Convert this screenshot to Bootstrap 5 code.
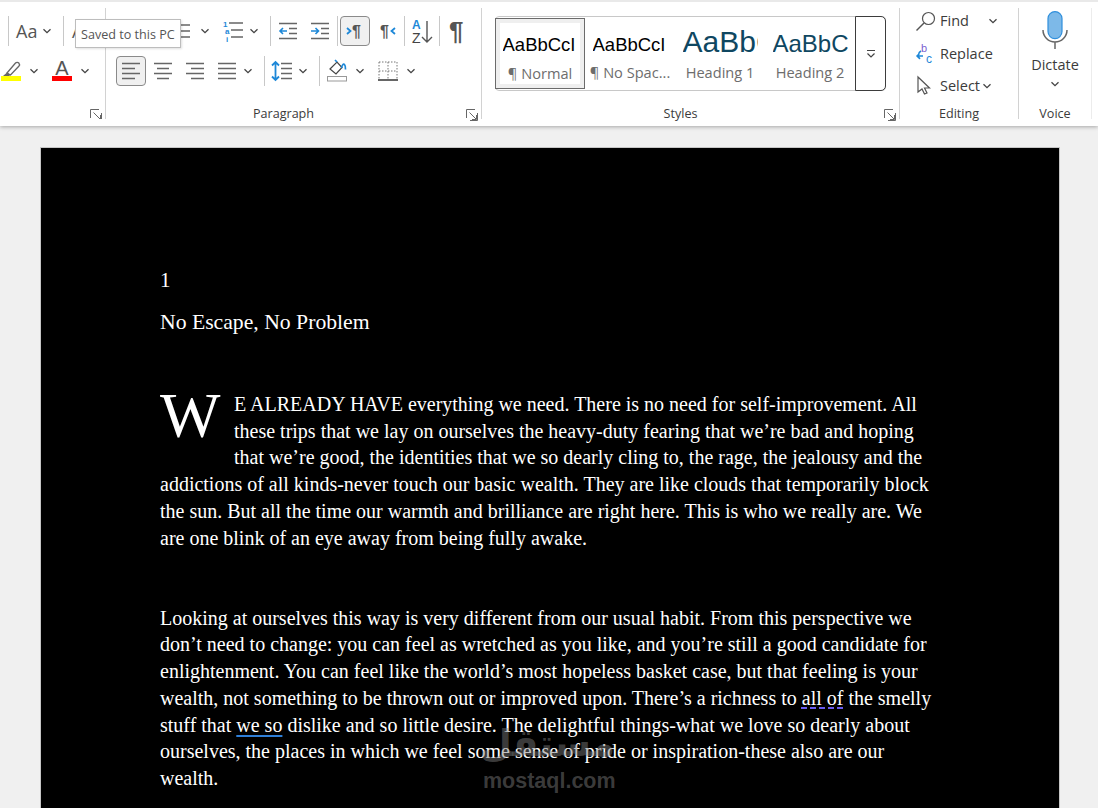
<!DOCTYPE html>
<html lang="en">
<head>
  <meta charset="UTF-8">
  <meta name="viewport" content="width=device-width, initial-scale=1">
  <title>No Escape, No Problem</title>
  <link href="https://cdn.jsdelivr.net/npm/bootstrap@5.3.0/dist/css/bootstrap.min.css" rel="stylesheet">
  <style>
    html, body { height: 808px; overflow: hidden; }
    body { background: #f0f0f0; font-family: "Open Sans", "Noto Sans", sans-serif; color: #3b3b3b; }
    svg { flex: none; display: block; overflow: visible; }
    svg text { font-family: "Liberation Sans", sans-serif; }

    .ribbon { height: 126px; background: #fff; border-top: 2px solid #e9e9e9; padding: 6px 0 7px; box-shadow: 0 1px 4px rgba(0,0,0,.3); position: relative; }
    .rgroup { border-right: 1px solid #d2d2d2; height: 111px; flex: none; position: relative; }
    .g-font { width: 106px; overflow: hidden; }
    .g-para { width: 376px; }
    .g-styles { width: 418px; }
    .g-edit { width: 119px; }
    .g-voice { width: 73px; border-right-color: #ececec; }
    .trow { height: 30px; margin-top: 8px; margin-bottom: 10px; }
    .trow + .trow { margin-top: 0; }
    .tsep { width: 1px; height: 30px; background: #c8c8c8; flex: none; }
    .tact { width: 30px; height: 30px; flex: none; background: #f0f0f0; border: 1px solid #8a8a8a; border-radius: 4px; }
    .aa { font-size: 18px; width: 21px; line-height: 29px; white-space: nowrap; color: #555; }
    .alab { font-size: 18px; line-height: 29px; color: #555; }
    .glabel { height: 15px; font-size: 12.6px; line-height: 15px; color: #3b3b3b; }
    .glabel-row { position: absolute; top: 98px; left: 0; right: 0; }
    .launch { margin: 3px 3px 0 5px; }

    .gallery { width: 391px; height: 75px; margin: 8px 0 0 13px; border: 1px solid #c8c8c8; border-radius: 4px; }
    .scell { width: 90px; height: 73px; overflow: hidden; text-align: center; flex: none; }
    .scell-on { height: 71px; margin-top: 1px; border: 1px solid #6b6b6b; box-shadow: inset 0 0 0 4px #efefef; margin-left: -1px; }
    .ssample { height: 41px; width: 75px; margin: 0 auto; overflow: hidden; white-space: nowrap; text-align: left; color: #000; font-family: "Liberation Sans", sans-serif; }
    .s-body { font-size: 18.5px; line-height: 55px; }
    .s-h1 { font-size: 30px; line-height: 50px; color: #0f4761; }
    .s-h2 { font-size: 24px; line-height: 53px; color: #0f4761; }
    .sname { font-size: 14.6px; line-height: 20px; color: #6d6d6d; white-space: nowrap; margin-top: 4px; }
    .scell-on .ssample { margin-top: -2px; }
    .scell-on .sname { margin-top: 5px; }
    .smore { width: 31px; height: 75px; margin: -1px -1px 0 0; border: 1px solid #3d3d3d; border-radius: 0 5px 5px 0; background: #fff; flex: none; }

    .erow { height: 32.5px; font-size: 14.5px; line-height: 32px; white-space: nowrap; }
    .erow-first { margin-top: -3px; }
    .erow-text { width: 47px; }
    .mic { margin: 3px auto 6px; }
    .dict { font-size: 14.5px; line-height: 20px; }

    .tipbox { position: absolute; left: 75px; top: 17px; width: 106px; height: 29px; background: #fff; border: 1px solid #bdbdbd; box-shadow: 1px 1px 2px rgba(0,0,0,.12); font-size: 12.6px; line-height: 29px; padding-left: 5px; color: #555; white-space: nowrap; z-index: 3; }

    .docpage { position: relative; width: 1018px; height: 700px; margin: 22px 0 0 41px; background: #000; outline: 1px solid #c6c6c6; color: #fff; padding: 119px 0 0 119px; font-family: "Liberation Serif", "Times New Roman", serif; font-size: 20px; line-height: 26.75px; white-space: nowrap; }
    .pnum { height: 26.75px; font-size: 21px; }
    .ptitle { margin-top: 15px; font-size: 21.7px; }
    .para1 { margin-top: 55.3px; }
    .para2 { margin-top: 53.4px; }
    .dropcap { float: left; font-size: 64px; line-height: 50px; height: 74px; width: 74px; }
    .sq-blue { text-decoration: underline 2px #2f7fd8; text-underline-offset: 3px; }
    .sq-dot { text-decoration: underline dashed 2px #6a5cf0; text-underline-offset: 3px; }
    .wmark { position: absolute; left: 442px; top: 571px; width: 132px; text-align: center; color: rgba(125,125,125,.48); font-family: "Liberation Sans", sans-serif; font-weight: 700; pointer-events: none; }
    .wmark-ar { font-family: "DejaVu Sans", sans-serif; font-size: 37px; line-height: 50px; }
    .wmark-en { font-size: 21.5px; line-height: 24px; }

    .l1{margin-left:1px}.l2{margin-left:2px}.l5{margin-left:5px}.l6{margin-left:6px}.l7{margin-left:7px}.l8{margin-left:8px}.l9{margin-left:9px}.l10{margin-left:10px}.l11{margin-left:11px}.l13{margin-left:13px}.l14{margin-left:14px}.l64{margin-left:64px}
  </style>
</head>
<body>

<svg width="0" height="0" class="position-absolute">
  <symbol id="chev" viewBox="0 0 10 10"><path d="M1.500 3.200 5 6.700 8.500 3.200" fill="none" stroke="#444" stroke-width="1.300"/></symbol>
  <symbol id="launch" viewBox="0 0 12 12"><path d="M.5 9V.5H9M4 11.500h7.500V4M3.500 3.500 10 10M10.500 6v4.500H6" fill="none" stroke="#666" stroke-width="1"/></symbol>
</svg>

<!-- Ribbon -->
<div class="ribbon d-flex">

  <div class="rgroup g-font">
    <div class="trow d-flex align-items-center">
      <span class="tsep l8"></span>
      <span class="aa l7">Aa</span>
      <svg class="l5" width="10" height="10"><use href="#chev"/></svg>
      <span class="tsep l11"></span>
      <span class="alab l8">A</span>
    </div>
    <div class="trow d-flex align-items-center">
      <svg class="l1" width="22" height="24" viewBox="0 0 22 24"><path d="M6 14 14.500 4c1-1 2.500-.8 3.300 0 .9 1 .9 2.200 0 3.200L9.500 16z" fill="#fff" stroke="#666" stroke-width="1.300"/><path d="M6 13.500 9.500 16l-1.500 1H2z" fill="#666"/><rect y="17" width="20" height="5" fill="#ff0"/></svg>
      <svg class="l6" width="10" height="10"><use href="#chev"/></svg>
      <svg class="l13" width="20" height="24" viewBox="0 0 20 24"><text x="10" y="16" font-size="20" text-anchor="middle" fill="#555">A</text><rect y="17" width="20" height="5" fill="#f00"/></svg>
      <svg class="l8" width="10" height="10"><use href="#chev"/></svg>
    </div>
    <div class="glabel-row d-flex">
      <span class="glabel flex-grow-1"></span>
      <svg class="launch" width="12" height="12"><use href="#launch"/></svg>
    </div>
  </div>

  <div class="rgroup g-para">
    <div class="trow d-flex align-items-center">
      <svg class="l64" width="20" height="20" viewBox="0 0 20 20"><path d="M0 4h20M0 10h20M0 16h20" stroke="#666" stroke-width="1.600"/></svg>
      <svg class="l10" width="10" height="10"><use href="#chev"/></svg>
      <svg class="l13" width="20" height="22" viewBox="0 0 20 22"><g fill="#1e88d8" font-size="8" font-weight="700"><text x="0" y="7">1</text><text x="2" y="14">a</text><text x="3" y="22">i</text></g><path d="M6 3h14M8 10h12M8 17h12" stroke="#666" stroke-width="1.600"/></svg>
      <svg class="l6" width="10" height="10"><use href="#chev"/></svg>
      <span class="tsep l11"></span>
      <svg class="l8" width="18" height="18" viewBox="0 0 18 18"><path d="M0 1.500h18M10 6.500h8M10 11.500h8M0 16.500h18" stroke="#666" stroke-width="1.600"/><path d="M8 9H1M4 6 1 9l3 3" fill="none" stroke="#1e88d8" stroke-width="1.600"/></svg>
      <svg class="l14" width="18" height="18" viewBox="0 0 18 18"><path d="M0 1.500h18M10 6.500h8M10 11.500h8M0 16.500h18" stroke="#666" stroke-width="1.600"/><path d="M0 9h7M4.500 6l3 3-3 3" fill="none" stroke="#1e88d8" stroke-width="1.600"/></svg>
      <span class="tsep l8"></span>
      <span class="tact l2 d-flex align-items-center justify-content-center">
        <svg width="18" height="16" viewBox="0 0 18 16"><path d="M1 5l3.500 3L1 11" fill="none" stroke="#1e88d8" stroke-width="1.800"/><text x="6" y="14" font-size="16" font-weight="700" fill="#555">¶</text></svg>
      </span>
      <svg class="l10" width="16" height="16" viewBox="0 0 16 16"><text x="0" y="14" font-size="16" font-weight="700" fill="#555">¶</text><path d="M15 5l-3.500 3 3.500 3" fill="none" stroke="#1e88d8" stroke-width="1.800"/></svg>
      <span class="tsep l8"></span>
      <svg class="l6" width="22" height="26" viewBox="0 0 22 26"><text x="1" y="11" font-size="12" font-weight="700" fill="#1e88d8">A</text><text x="1" y="25" font-size="14" fill="#444">Z</text><path d="M16 3v21M11 19l5 5 5-5" fill="none" stroke="#555" stroke-width="1.400"/></svg>
      <span class="tsep l6"></span>
      <svg class="l9" width="16" height="22" viewBox="0 0 16 22"><text x="0" y="20" font-size="26" font-weight="700" fill="#555">¶</text></svg>
    </div>
    <div class="trow d-flex align-items-center">
      <span class="tact l10 d-flex align-items-center justify-content-center">
        <svg width="18" height="18" viewBox="0 0 18 18"><path d="M0 1.500h18M0 6.500h13M0 11.500h18M0 16.500h13" stroke="#666" stroke-width="1.600"/></svg>
      </span>
      <svg class="l8" width="18" height="18" viewBox="0 0 18 18"><path d="M0 1.500h18M3 6.500h12M0 11.500h18M3 16.500h12" stroke="#666" stroke-width="1.600"/></svg>
      <svg class="l14" width="18" height="18" viewBox="0 0 18 18"><path d="M0 1.500h18M5 6.500h13M0 11.500h18M5 16.500h13" stroke="#666" stroke-width="1.600"/></svg>
      <svg class="l14" width="18" height="18" viewBox="0 0 18 18"><path d="M0 1.500h18M0 6.500h18M0 11.500h18M0 16.500h18" stroke="#666" stroke-width="1.600"/></svg>
      <svg class="l7" width="10" height="10"><use href="#chev"/></svg>
      <span class="tsep l11"></span>
      <svg class="l7" width="20" height="20" viewBox="0 0 20 20"><path d="M3.500 2v16M0 4.500l3.500-3.500L7 4.500M0 15.500 3.500 19 7 15.500" fill="none" stroke="#1e88d8" stroke-width="1.800"/><path d="M9 2.500h11M9 7.500h11M9 12.500h11M9 17.500h11" stroke="#666" stroke-width="1.600"/></svg>
      <svg class="l6" width="10" height="10"><use href="#chev"/></svg>
      <span class="tsep l11"></span>
      <svg class="l7" width="20" height="22" viewBox="0 0 20 22"><path d="M3 9 10 2l5 5.500-6 6.500z" fill="#fff" stroke="#444" stroke-width="1.200"/><path d="M10 2 8 0M14.500 8c.5-3 2-4.500 3-3.500.8.800 1 2.500 1 5" fill="none" stroke="#1e88d8" stroke-width="1.700"/><rect x=".5" y="16.500" width="19" height="4.500" fill="#fff" stroke="#999"/></svg>
      <svg class="l8" width="10" height="10"><use href="#chev"/></svg>
      <svg class="l13" width="20" height="20" viewBox="0 0 20 20"><path d="M1 1h18M1 1v18M19 1v18M10 1v18M1 10h18" stroke="#777" stroke-width="1" stroke-dasharray="1.500 1.500" fill="none"/><path d="M0 19h20" stroke="#555" stroke-width="1.800"/></svg>
      <svg class="l8" width="10" height="10"><use href="#chev"/></svg>
    </div>
    <div class="glabel-row d-flex">
      <span class="glabel flex-grow-1 text-center">Paragraph</span>
      <svg class="launch" width="12" height="12"><use href="#launch"/></svg>
    </div>
  </div>

  <div class="rgroup g-styles">
    <div class="gallery d-flex">
      <div class="scell scell-on">
        <div class="ssample s-body">AaBbCcI</div>
        <div class="sname">¶ Normal</div>
      </div>
      <div class="scell">
        <div class="ssample s-body">AaBbCcI</div>
        <div class="sname">¶ No Spac...</div>
      </div>
      <div class="scell">
        <div class="ssample s-h1">AaBbC</div>
        <div class="sname">Heading 1</div>
      </div>
      <div class="scell">
        <div class="ssample s-h2">AaBbC</div>
        <div class="sname">Heading 2</div>
      </div>
      <div class="smore d-flex align-items-center justify-content-center">
        <svg width="10" height="10" viewBox="0 0 10 10"><path d="M1 1.500h8M1.500 4.500 5 8l3.500-3.500" fill="none" stroke="#444" stroke-width="1.200"/></svg>
      </div>
    </div>
    <div class="glabel-row d-flex">
      <span class="glabel flex-grow-1 text-center">Styles</span>
      <svg class="launch" width="12" height="12"><use href="#launch"/></svg>
    </div>
  </div>

  <div class="rgroup g-edit">
    <div class="erow erow-first d-flex align-items-center">
      <svg class="ms-3" width="19" height="20" viewBox="0 0 19 20"><circle cx="12.500" cy="7.500" r="6" fill="none" stroke="#555" stroke-width="1.200"/><path d="M8 12 .5 19.500" stroke="#555" stroke-width="1.500"/></svg>
      <span class="erow-text l5">Find</span>
      <svg class="l1" width="10" height="10"><use href="#chev"/></svg>
    </div>
    <div class="erow d-flex align-items-center">
      <svg class="l14" width="20" height="22" viewBox="0 0 20 22"><text x="7" y="9" font-size="11" fill="#7a5fd0">b</text><text x="12" y="20" font-size="12" fill="#1e88d8">c</text><path d="M7 8a5 5 0 0 0-1 8M9 13H3M5.500 10.500 3 13l2.500 2.500" fill="none" stroke="#1e88d8" stroke-width="1.500"/></svg>
      <span class="l6">Replace</span>
    </div>
    <div class="erow d-flex align-items-center">
      <svg class="ms-3" width="16" height="20" viewBox="0 0 16 20"><path d="M2 1v15l4-3 2.500 5 2.500-1-2.500-5h5z" fill="#fff" stroke="#555" stroke-width="1.200"/></svg>
      <span class="l8">Select</span>
      <svg class="l2" width="10" height="10"><use href="#chev"/></svg>
    </div>
    <div class="glabel-row text-center glabel">Editing</div>
  </div>

  <div class="rgroup g-voice text-center">
    <svg class="mic" width="26" height="38" viewBox="0 0 26 38"><rect x="6" y=".6" width="14" height="27" rx="7" fill="#7db9e8" stroke="#2f8fdc" stroke-width="1.200"/><path d="M1 19a12 12 0 0 0 24 0M13 31v7" fill="none" stroke="#666" stroke-width="1.500"/></svg>
    <div class="dict">Dictate</div>
    <svg class="mx-auto mt-1" width="10" height="10"><use href="#chev"/></svg>
    <div class="glabel-row text-center glabel">Voice</div>
  </div>

  <div class="tipbox">Saved to this PC</div>
</div>

<!-- Document -->
<div class="docpage">
  <div class="pnum">1</div>
  <div class="ptitle">No Escape, No Problem</div>
  <div class="para1">
    <span class="dropcap">W</span>E ALREADY HAVE everything we need. There is no need for self-improvement. All<br>
    these trips that we lay on ourselves the heavy-duty fearing that we’re bad and hoping<br>
    that we’re good, the identities that we so dearly cling to, the rage, the jealousy and the<br>
    addictions of all kinds-never touch our basic wealth. They are like clouds that temporarily block<br>
    the sun. But all the time our warmth and brilliance are right here. This is who we really are. We<br>
    are one blink of an eye away from being fully awake.
  </div>
  <div class="para2">
    Looking at ourselves this way is very different from our usual habit. From this perspective we<br>
    don’t need to change: you can feel as wretched as you like, and you’re still a good candidate for<br>
    enlightenment. You can feel like the world’s most hopeless basket case, but that feeling is your<br>
    wealth, not something to be thrown out or improved upon. There’s a richness to <span class="sq-dot">all of</span> the smelly<br>
    stuff that <span class="sq-blue">we so</span> dislike and so little desire. The delightful things-what we love so dearly about<br>
    ourselves, the places in which we feel some sense of pride or inspiration-these also are our<br>
    wealth.
  </div>
  <div class="wmark">
    <div class="wmark-ar" dir="rtl" lang="ar">مستقل</div>
    <div class="wmark-en">mostaql.com</div>
  </div>
</div>

<script src="https://cdn.jsdelivr.net/npm/bootstrap@5.3.0/dist/js/bootstrap.bundle.min.js"></script>
</body>
</html>
